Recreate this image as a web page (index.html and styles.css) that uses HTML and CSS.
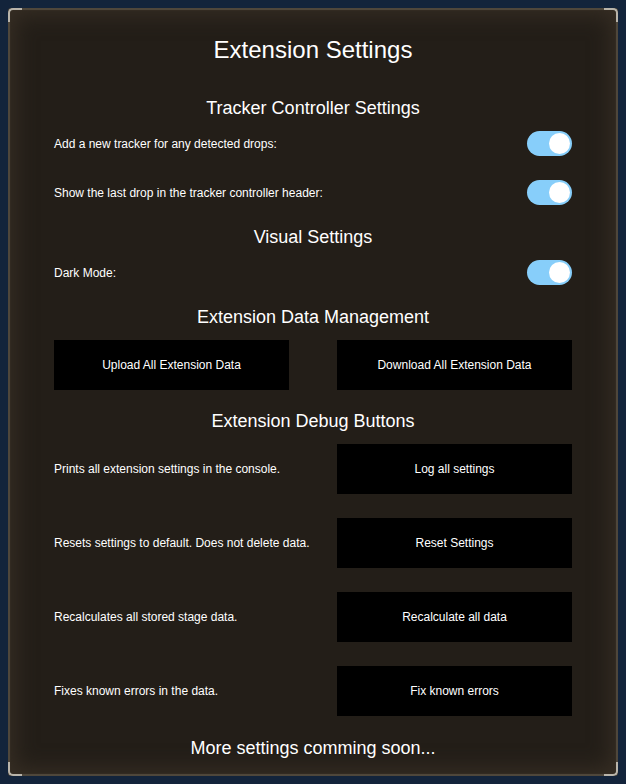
FILE: index.html
```html
<!DOCTYPE html>
<html>
<head>
<meta charset="utf-8">
<link rel="stylesheet" href="styles.css">
</head>
<body>
<div class="panel">
  <span class="corner tl"></span><span class="corner tr"></span><span class="corner bl"></span><span class="corner br"></span>
  <h1 class="title">Extension Settings</h1>

  <section class="section first">
    <h2 class="heading">Tracker Controller Settings</h2>
    <div class="rows toggles">
      <div class="row"><span class="label">Add a new tracker for any detected drops:</span><span class="toggle"><span class="knob"></span></span></div>
      <div class="row"><span class="label">Show the last drop in the tracker controller header:</span><span class="toggle"><span class="knob"></span></span></div>
    </div>
  </section>

  <section class="section">
    <h2 class="heading">Visual Settings</h2>
    <div class="rows toggles">
      <div class="row"><span class="label">Dark Mode:</span><span class="toggle"><span class="knob"></span></span></div>
    </div>
  </section>

  <section class="section">
    <h2 class="heading">Extension Data Management</h2>
    <div class="row">
      <button class="btn">Upload All Extension Data</button>
      <button class="btn">Download All Extension Data</button>
    </div>
  </section>

  <section class="section debug">
    <h2 class="heading">Extension Debug Buttons</h2>
    <div class="rows buttons">
      <div class="row"><span class="label">Prints all extension settings in the console.</span><button class="btn">Log all settings</button></div>
      <div class="row"><span class="label">Resets settings to default. Does not delete data.</span><button class="btn">Reset Settings</button></div>
      <div class="row"><span class="label">Recalculates all stored stage data.</span><button class="btn">Recalculate all data</button></div>
      <div class="row"><span class="label">Fixes known errors in the data.</span><button class="btn">Fix known errors</button></div>
    </div>
  </section>

  <h2 class="heading footer">More settings comming soon...</h2>
</div>
</body>
</html>
```

FILE: styles.css
```css
html, body {
  margin: 0;
  padding: 0;
}
body {
  background: #13243b;
  font-family: "Liberation Sans", Arial, sans-serif;
  color: #ffffff;
  width: 626px;
  height: 784px;
  overflow: hidden;
}
.panel {
  position: relative;
  box-sizing: border-box;
  margin: 8px;
  width: 610px;
  height: 768px;
  border: 2px solid #4f473b;
  border-radius: 3px;
  background: #231e18;
  box-shadow: inset 0 0 22px 4px #382f25, inset 0 0 0 1px #2a241d;
  padding: 26px 44px 0 44px;
  display: flex;
  flex-direction: column;
}
.corner {
  position: absolute;
  width: 12px;
  height: 12px;
  border-color: #b9b4aa;
  border-style: solid;
  border-width: 0;
}
.corner.tl { top: -2px; left: -2px; border-top-width: 2px; border-left-width: 2px; border-top-left-radius: 5px; }
.corner.tr { top: -2px; right: -2px; border-top-width: 2px; border-right-width: 2px; border-top-right-radius: 5px; }
.corner.bl { bottom: -2px; left: -2px; border-bottom-width: 2px; border-left-width: 2px; border-bottom-left-radius: 5px; }
.corner.br { bottom: -2px; right: -2px; border-bottom-width: 2px; border-right-width: 2px; border-bottom-right-radius: 5px; }

.title {
  margin: 0;
  font-size: 24px;
  line-height: 28px;
  font-weight: normal;
  text-align: center;
}
.section {
  margin-top: 21px;
}
.section.first {
  margin-top: 33px;
}
.section.debug {
  margin-top: 20px;
}
.heading {
  margin: 0 0 12px 0;
  font-size: 18px;
  line-height: 22px;
  font-weight: normal;
  text-align: center;
}
.footer {
  margin-top: 21px;
}
.rows {
  display: flex;
  flex-direction: column;
}
.toggles { gap: 24px; }
.buttons { gap: 24px; }
.row {
  display: flex;
  justify-content: space-between;
  align-items: center;
}
.label {
  font-size: 12px;
  line-height: 14px;
}
.toggle {
  position: relative;
  box-sizing: border-box;
  width: 45px;
  height: 25px;
  border-radius: 13px;
  background: #87cefa;
  display: flex;
  justify-content: flex-end;
  align-items: center;
  padding-right: 2px;
}
.knob {
  width: 21px;
  height: 21px;
  border-radius: 50%;
  background: #ffffff;
}
.btn {
  width: 235px;
  height: 50px;
  background: #000000;
  color: #ffffff;
  border: none;
  font-family: "Liberation Sans", Arial, sans-serif;
  font-size: 12px;
  padding: 0;
  margin: 0;
}
```
